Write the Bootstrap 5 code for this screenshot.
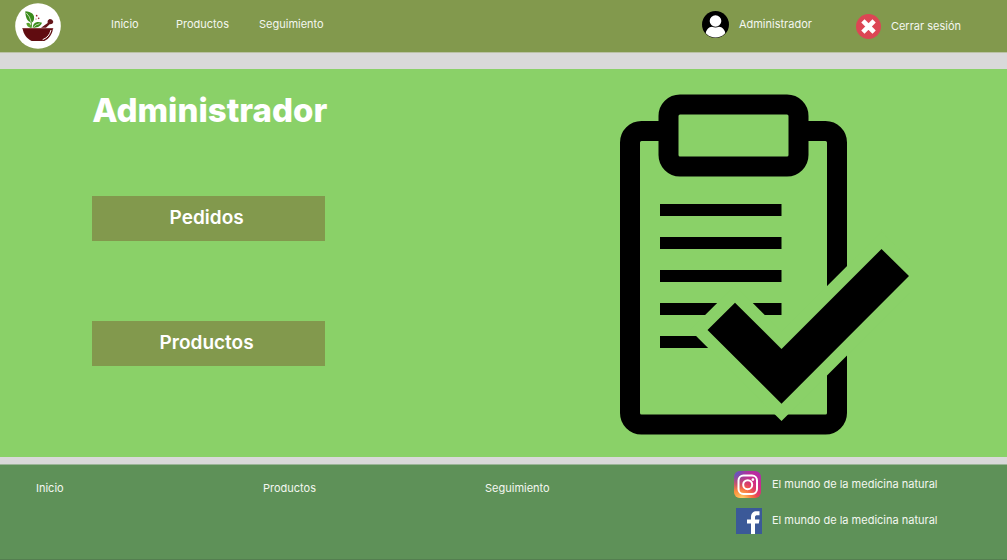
<!DOCTYPE html>
<html lang="es">
<head>
<meta charset="utf-8">
<meta name="viewport" content="width=device-width, initial-scale=1">
<title>Administrador - El mundo de la medicina natural</title>
<link href="https://cdn.jsdelivr.net/npm/bootstrap@5.3.0/dist/css/bootstrap.min.css" rel="stylesheet">
<style>
  body { font-family: Inter, "Liberation Sans", sans-serif; font-size: 11px; line-height: 16px; background: #d9d9d9; }
  a { color: #f4f7f0; text-decoration: none; }
  a:hover { color: #fff; text-decoration: underline; }
  svg { display: block; flex-shrink: 0; }
  .topbar { background: #82994d; border-bottom: 1px solid #bbc2a5; padding: 3px 46px 3px 15px; margin-bottom: 16px; }
  .topbar-links { display: grid; grid-template-columns: 65px 83px auto; margin-left: 50px; padding-bottom: 4px; }
  .account-links { gap: 44px; }
  .icon-text { display: flex; align-items: center; gap: 10px; }
  .panel { background: #8ad168; padding: 25px 9.6% 22px 9.15%; margin-bottom: 7px; }
  .panel h1 { font-size: 33px; line-height: 32px; font-weight: 800; color: #fff; margin-bottom: 70px; }
  .panel-actions { width: 233px; gap: 80px; }
  .btn-panel { --bs-btn-color: #fff; --bs-btn-bg: #82994d; --bs-btn-hover-color: #fff; --bs-btn-hover-bg: #72883f; --bs-btn-active-color: #fff; --bs-btn-active-bg: #72883f; --bs-btn-font-size: 19px; --bs-btn-font-weight: 600; --bs-btn-line-height: 24px; --bs-btn-border-width: 0; --bs-btn-border-radius: 0; --bs-btn-padding-x: 0; padding: 10px 4px 11px 0; }
  .footer-bar { background: #5e9158; border-top: 1px solid #9bb597; border-bottom: 1px solid #547f50; padding: 6px 0 24px 36px; flex-grow: 1; }
  .footer-grid { display: grid; grid-template-columns: 227fr 222fr 249fr 273fr; }
  .footer-grid > a { padding-top: 9px; }
  .social-links { gap: 10px; }
  .social-links .icon-text span { padding-bottom: 2px; }
</style>
</head>
<body class="d-flex flex-column min-vh-100">
<header class="topbar d-flex align-items-center">
  <a href="#" aria-label="El mundo de la medicina natural">
    <svg width="46" height="46" viewBox="45 9 138 138" aria-hidden="true">
      <circle cx="114" cy="78" r="68.500" fill="#fff"/>
      <path d="M76 34C94 35 105 44 102 58C101 64 98 67 94 68C82 65 76 53 76 34Z" fill="#3b8c1c"/>
      <path d="M79 39Q90 48 94 68L92 80" fill="none" stroke="#fff" stroke-width="2"/>
      <path d="M93 66Q96 74 93 83" fill="none" stroke="#3b8c1c" stroke-width="3"/>
      <path d="M79 70C86 65 92 70 95 83H91C84 82 80 77 79 70Z" fill="#5ba42e"/>
      <path d="M98 83C99 68 110 62 126 68C122 79 113 82 103 83Z" fill="#3b8c1c"/>
      <path d="M100 82Q107 73 119 71" fill="none" stroke="#fff" stroke-width="2"/>
      <g fill="#9c2634"><circle cx="110" cy="47" r="2.500"/><circle cx="116" cy="55" r="2.500"/><circle cx="108" cy="57" r="1.500"/></g>
      <path d="M123 83L143 69Q141 60 149 57Q158 57 160 66Q158 74 149 73L138 83Z" fill="#641519"/>
      <path d="M68 85H159C157 103 147 117 133 123H95C80 116 70 103 68 85Z" fill="#600c10"/>
      <path d="M153 90C149 105 142 113 128 119" fill="none" stroke="#fff" stroke-width="3"/>
      <path d="M66 86H160" stroke="#8b373b" stroke-width="2"/>
    </svg>
  </a>
  <nav class="topbar-links" aria-label="Principal">
    <a href="#">Inicio</a>
    <a href="#">Productos</a>
    <a href="#">Seguimiento</a>
  </nav>
  <div class="account-links d-flex ms-auto">
    <a href="#" class="icon-text pb-1">
      <svg width="27" height="27" viewBox="0 0 27 27" aria-hidden="true">
        <defs><clipPath id="avatar"><circle cx="13.500" cy="13.500" r="13"/></clipPath></defs>
        <circle cx="13.500" cy="13.500" r="13.500"/>
        <g fill="#fff" clip-path="url(#avatar)"><circle cx="13.500" cy="10" r="5.800"/><path d="M3.500 27V24C3.500 19 7 15.800 10 15.800Q13.500 17.200 17 15.800C20 15.800 23.500 19 23.500 24V27Z"/></g>
      </svg>
      Administrador
    </a>
    <a href="#" class="icon-text">
      <svg width="25" height="25" viewBox="0 0 25 25" aria-hidden="true">
        <circle cx="12.500" cy="12.500" r="12.500" fill="#dc4654"/>
        <path d="M8.500 8.500L16.500 16.500M16.500 8.500L8.500 16.500" stroke="#fff" stroke-width="4.600" stroke-linecap="square"/>
      </svg>
      Cerrar sesión
    </a>
  </div>
</header>

<main class="panel d-flex justify-content-between">
  <div>
    <h1>Administrador</h1>
    <div class="panel-actions d-flex flex-column">
      <button type="button" class="btn btn-panel">Pedidos</button>
      <button type="button" class="btn btn-panel">Productos</button>
    </div>
  </div>
  <svg width="291" height="341" viewBox="619 94 291 341" role="img" aria-label="Lista de verificación">
    <rect x="630" y="131" width="207" height="293.500" rx="11.500" fill="none" stroke="#000" stroke-width="20"/>
    <rect x="668.500" y="104.500" width="130" height="62" rx="11.500" fill="#8ad168" stroke="#000" stroke-width="20"/>
    <path d="M660 210H781.500M660 243H781.500M660 276H781.500M660 309H781.500M660 342H781.500" stroke="#000" stroke-width="12"/>
    <path d="M707.500 330L735 302.700L781.500 349L881.500 249L909 276L781.500 403.700Z" stroke="#8ad168" stroke-width="24.600"/>
    <path d="M707.500 330L735 302.700L781.500 349L881.500 249L909 276L781.500 403.700Z"/>
  </svg>
</main>

<footer class="footer-bar">
  <div class="footer-grid">
    <a href="#">Inicio</a>
    <a href="#">Productos</a>
    <a href="#">Seguimiento</a>
    <div class="social-links d-flex flex-column">
      <a href="#" class="icon-text">
        <svg width="28" height="27" viewBox="0 0 28 27" aria-hidden="true">
          <defs>
            <linearGradient id="ig" x1="0" y1="1" x2="1" y2="0"><stop offset="0" stop-color="#fda43a"/><stop offset=".35" stop-color="#f4523f"/><stop offset=".65" stop-color="#d22d83"/><stop offset="1" stop-color="#a72bb5"/></linearGradient>
            <radialGradient id="igGold" cx=".3" cy="1.050" r=".6"><stop offset="0" stop-color="#ffdc72"/><stop offset="1" stop-color="#ff8a30" stop-opacity="0"/></radialGradient>
            <radialGradient id="igBlue" cx="0" cy="0" r=".75"><stop offset="0" stop-color="#3b62d8"/><stop offset="1" stop-color="#8433bd" stop-opacity="0"/></radialGradient>
          </defs>
          <rect width="27" height="27" rx="6" fill="url(#ig)"/>
          <rect width="27" height="27" rx="6" fill="url(#igGold)"/>
          <rect width="27" height="27" rx="6" fill="url(#igBlue)"/>
          <g fill="none" stroke="#fff" stroke-width="2"><rect x="4.500" y="4.500" width="18.500" height="18.500" rx="5"/><circle cx="13.700" cy="13.700" r="4.500"/></g>
          <circle cx="18.900" cy="8.600" r="1.300" fill="#fff"/>
        </svg>
        <span>El mundo de la medicina natural</span>
      </a>
      <a href="#" class="icon-text">
        <svg width="28" height="26" viewBox="0 0 28 26" aria-hidden="true">
          <rect x="2" width="26" height="26" fill="#3b5998"/>
          <path d="M17 26V15.500H13V11.500H17V9C17 5 19.300 3.200 22.500 3.200H25.500V7.200H23.500C21.800 7.200 21 7.800 21 9.200V11.500H25.500L24.800 15.500H21V26Z" fill="#fff"/>
        </svg>
        <span>El mundo de la medicina natural</span>
      </a>
    </div>
  </div>
</footer>
<script src="https://cdn.jsdelivr.net/npm/bootstrap@5.3.0/dist/js/bootstrap.bundle.min.js"></script>
</body>
</html>
